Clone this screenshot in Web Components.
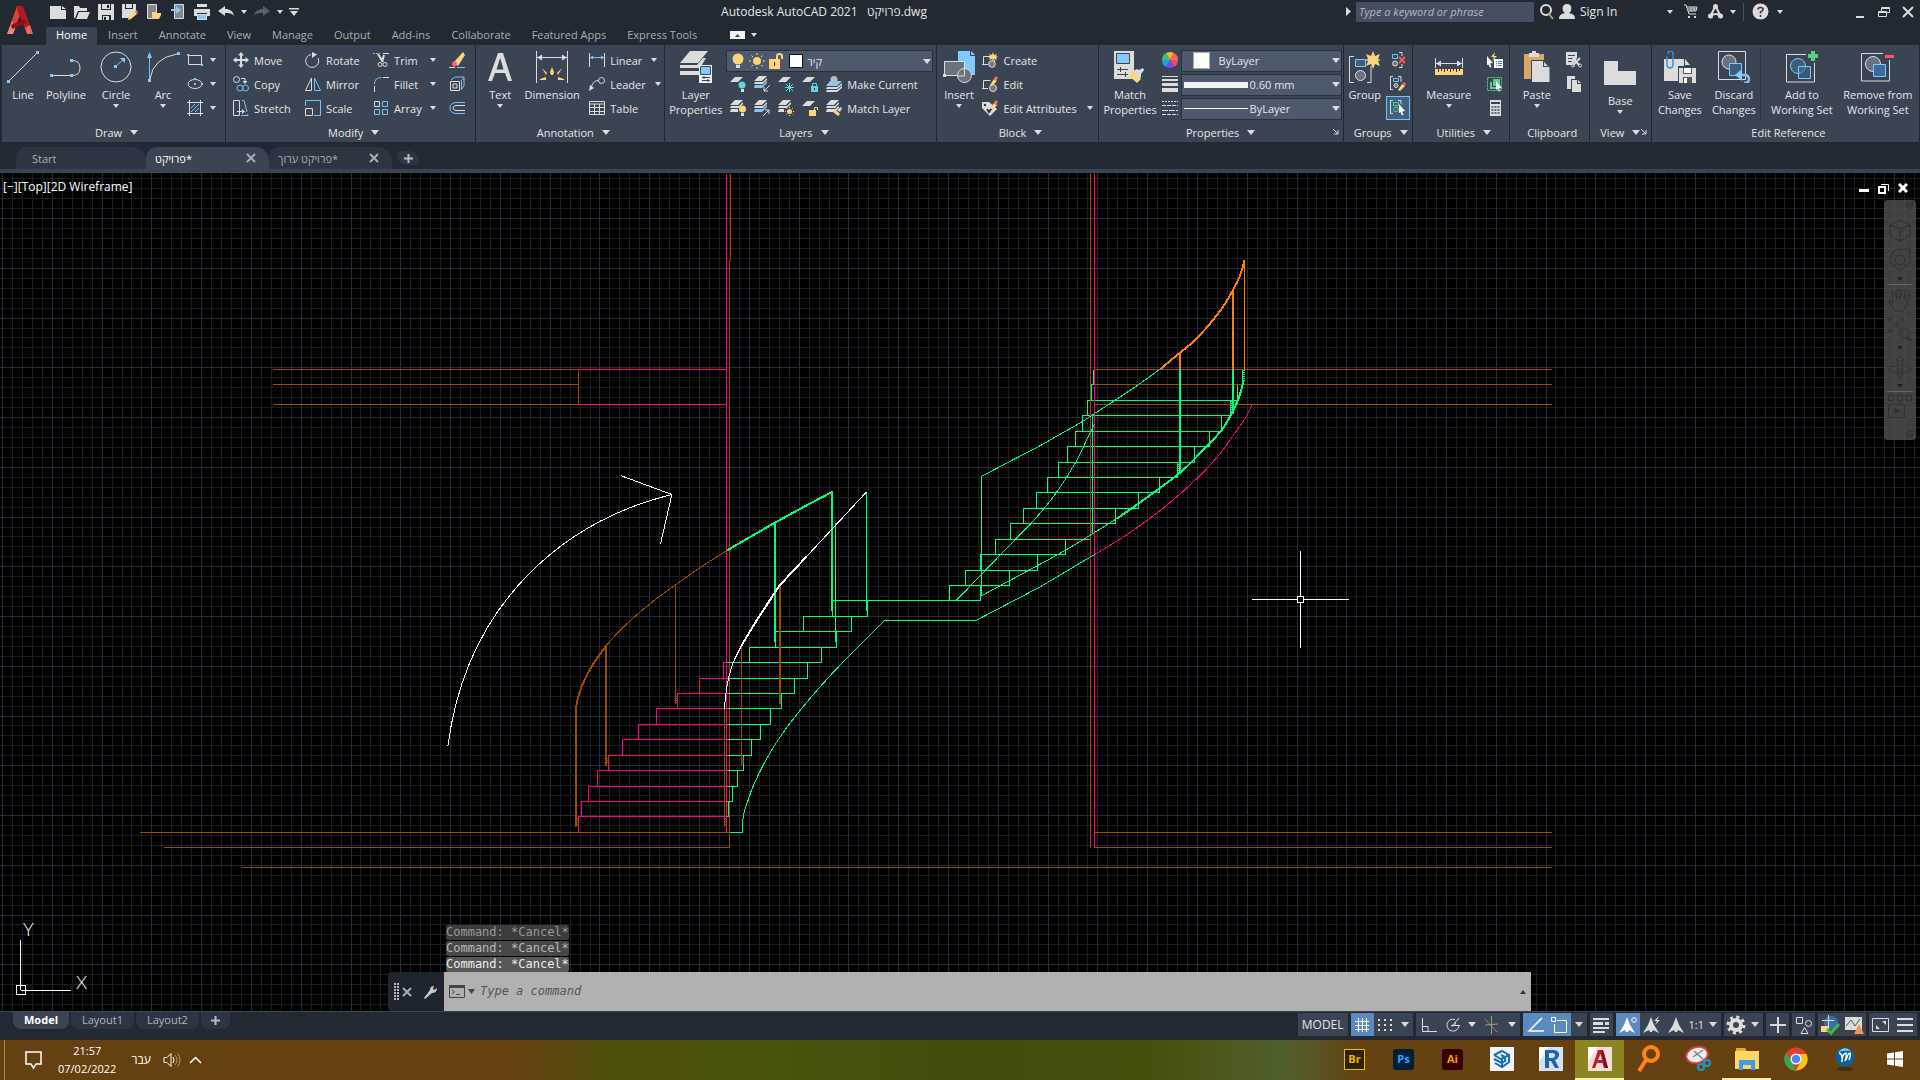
<!DOCTYPE html>
<html lang="en">
<head>
<meta charset="utf-8">
<title>Autodesk AutoCAD 2021</title>
<style>
  html, body { height: 100%; margin: 0; }
  body {
    background: #222933;
    color: #e6e6e6;
    font: 11px/15px "Open Sans", "Noto Sans", "DejaVu Sans", sans-serif;
    overflow: hidden;
  }
</style>
</head>
<body>
<cad-app></cad-app>

<script>
// [width, height, markup]; lower case classes stroke, upper case classes fill
const ICONS = {
  logo: [32, 32, `<path d="M3 30 13 2h6L9 30z" fill="#d8423c"/><path d="M13 2h6l10 28h-6L14 8z" fill="#b5191f"/><path d="M3 30 8 17l3 8-2 5z" fill="#e88a80"/><path d="m23 30-2-6 5-3 3 9z" fill="#e06a62"/><path d="m7 21 14-6 1 4-14 6z" fill="#8f1015"/>`],
  caret: [8, 5, `<path class="L" d="M0 0h8L4 5z"/>`],
  tiny: [6, 4, `<path class="L" d="M0 0h6L3 4z"/>`],
  right: [5, 9, `<path class="L" d="M0 0l5 4.500L0 9z"/>`],
  qmenu: [10, 8, `<path class="L" d="M0 0h10v1.500H0zM1 3h8L5 8z"/>`],
  corner: [6, 6, `<path class="l" d="M0 0l5 5M5 1v4H1"/>`],
  newfile: [16, 16, `<path class="L" d="M0 2h11v4h5v9H0zM12 2l4 3h-4z"/>`],
  open: [16, 16, `<path class="L" d="M0 2h5l1 2h7v3H4L1 14H0zM5 8h11l-3 7H2z"/>`],
  save: [16, 16, `<path class="L" d="M0 0h3v6h10V0h3v16h-3v-5H4v5H0zM4 0h8v5H4zM5 12h6v4H5z"/><path fill="#222933" d="M9 1h2v3H9zM6 13h2v3H6z"/>`],
  saveas: [16, 16, `<path class="L" d="M0 0h3v5h8V0h3v7l-6 7H0z"/><path class="L" d="M4 0h6v4H4z"/><path d="M6 16l1-4 6-5 2 3-6 5z" fill="#ffd478"/><path d="m13 7 2-1 1 2-1 2z" fill="#f66"/>`],
  openweb: [16, 16, `<path fill="#888" stroke="#ddd" d="M1.500.500h9v14h-9z"/><path d="M6 8h4l1 1h4v2l-2 4H6z" fill="#ffd478"/>`],
  saveweb: [14, 16, `<path fill="#888" stroke="#ddd" d="M3.500.500h9v14h-9z"/><path class="B" d="M0 5h5V2l5 4-5 4V7H0z"/>`],
  print: [16, 16, `<path class="L" d="M3 0h10v3H3zM0 5h16v7h-3V9H3v3H0zM3 10h10v6H3z"/><path class="B" d="M4 11h8v4H4z"/>`],
  undo: [16, 12, `<path class="L" d="M0 5l7-5v3c5 0 8 2 9 7-2-3-5-3-9-3v3z"/>`],
  redo: [16, 12, `<path fill="#5b6068" d="M16 5L9 0v3C4 3 1 5 0 10c2-3 5-3 9-3v3z"/>`],
  search: [14, 16, `<circle class="l w2" cx="6" cy="6" r="5"/><path d="m9 10 4 5" stroke="#c89a5a" stroke-width="2"/>`],
  user: [16, 16, `<path class="L" d="M8 0c6 0 5 8 2 9 4 1 6 2 6 6H0c0-4 2-5 6-6C3 8 2 0 8 0z"/>`],
  cart: [14, 15, `<path class="l" d="M0 1h2l3 9h7M3 3h10l-1 4H4M4 5h9M7 3v4M10 3v4"/><path class="L" d="M4 12h2v2H4zM10 12h2v2h-2z"/>`],
  a360: [15, 15, `<path class="l w2" d="m7.500 2-5 10q5-4 10 0z"/><circle class="L" cx="7.500" cy="2.500" r="2.500"/><circle class="L" cx="2.500" cy="12" r="2.500"/><circle class="L" cx="12.500" cy="12" r="2.500"/>`],
  help: [17, 17, `<circle class="L" cx="8.500" cy="8.500" r="8"/><path d="M6 6.500q0-2 2.500-2t2.500 2q0 1.500-2.500 2.500v1.500M8.500 12v2" fill="none" stroke="#333" stroke-width="1.500"/>`],
  min: [8, 12, `<path class="l w2" d="M0 11h8"/>`],
  restore: [12, 12, `<path class="l" d="M.500 5.500h8v5h-8zM3.500 5V1.500h8v5H9M3 2.500h8M1 6.500h8"/>`],
  close: [12, 12, `<path class="l w2" d="m1 1 10 10M11 1 1 11"/>`],
  ribbonmin: [15, 8, `<path fill="#f2f2f2" d="M0 0h15v8H0z"/><path fill="#444" d="M5 6l2.500-3L10 6z"/>`],

  line: [32, 32, `<path class="l" d="m2 30 28-28"/><path class="B" d="M0 29h3v3H0zM29 0h3v3h-3z"/>`],
  polyline: [32, 32, `<path class="l" d="M2 24.500h20M22 9.500q8 0 8 7.500t-8 7.500"/><path class="B" d="M0 23h3v3H0zM20 8h3v3h-3zM20 23h3v3h-3z"/>`],
  circle: [32, 32, `<circle class="l" cx="16" cy="16" r="15"/><path class="b" d="m16 15 8-7"/><path class="B" d="M14 14h3v3h-3zM20 7h5v5z"/>`],
  arc: [34, 32, `<path class="l" d="M4 28Q7 7 31 3"/><path class="b" d="M3.500 4v25"/><path class="B" d="M1 7l2.500-6L6 7zM2 28h3v3H2zM31 1h3v3h-3z"/>`],
  rect: [16, 16, `<path class="l" d="M1.500 3.500h13v9h-13z"/><path class="B" d="M0 2h2v2H0zM14 12h2v2h-2z"/>`],
  ellipse: [16, 16, `<ellipse class="l" cx="8" cy="8" rx="7" ry="4.500"/><path class="B" d="M7 7h2v2H7zM7 2h2v2H7zM14 7h2v2h-2z"/>`],
  hatch: [16, 16, `<path class="l" d="M0 2.500h16M0 13.500h16M2.500 0v16M13.500 0v16"/><path class="b" d="m4 8 4-4M4 12l8-8M8 12l4-4"/>`],
  move: [16, 16, `<path class="l w2" d="M8 2v12M2 8h12"/><path class="L" d="M5 3.500 8 0l3 3.500zM5 12.500 8 16l3-3.500zM3.500 5 0 8l3.500 3zM12.500 5 16 8l-3.500 3z"/>`],
  copy: [16, 16, `<circle class="l" cx="3.500" cy="3.500" r="3"/><path class="l" d="M8 2.500h4v3"/><path class="L" d="M9.500 5h5L12 8z"/><circle class="b" cx="7" cy="12" r="3"/><circle class="b" cx="12.500" cy="12" r="3"/>`],
  stretch: [16, 16, `<path class="l" d="M.500.500h6v15h-6zM4 11.500h6"/><path class="L" d="M9 9l3 2.500L9 14z"/><path class="b" d="M9 .500h2l4 15H8" stroke-dasharray="14 2"/>`],
  rotate: [16, 16, `<path class="l" d="M6 2.500A6.500 6.500 0 1 0 13 6"/><path class="L" d="m7 0 5 2.500L7 6z"/>`],
  mirror: [16, 16, `<path class="l" d="M6.500 2v12.500h-6z"/><path class="b" d="M9.500 2v12.500h6z"/>`],
  scale: [16, 16, `<path class="b" d="M.500 6V.500h15v15H9"/><path class="l" d="M.500 8.500h7v7h-7z"/>`],
  trim: [16, 16, `<path class="b" d="M0 1.500h7" stroke-dasharray="2 1"/><path class="l" d="M10 1.500h6"/><path class="l w2" d="m5 2 5 8M11 3 9 10"/><circle class="l" cx="7" cy="12.500" r="2"/><circle class="l" cx="12" cy="12.500" r="2"/>`],
  fillet: [16, 16, `<path class="b" d="M1.500 8q0-6.500 7-6.500"/><path class="l" d="M10 1.500h6M1.500 10v6"/>`],
  array: [16, 16, `<path class="l" d="M1.500 1.500h5v5h-5z"/><path class="b" d="M9.500 1.500h5v5h-5zM1.500 9.500h5v5h-5zM9.500 9.500h5v5h-5z"/>`],
  erase: [16, 16, `<path class="l" d="M0 15.500h6"/><path class="b" d="M8 15.500h8"/><path d="M5 10 14 0l2 3-7 11z" fill="#ffd478"/><circle cx="5.500" cy="12" r="2.500" fill="#f66"/>`],
  explode: [16, 16, `<path class="l" d="M1.500 5.500h9v9h-9zM4 8h4v4H4z"/><path class="b" d="m2 4 4-3h9v9l-3 4M12 5l3-3M12.500 5v8"/>`],
  offset: [16, 16, `<path class="b" d="M16 2.500H7q-6 .500-6 5.500t6 5.500h9"/><path class="l" d="M16 5.500H7q-3 .500-3 2.500t3 2.500h9"/>`],
  text: [32, 32, `<path class="L" d="M4 30 14 2h5l9 28h-4l-3-8H11l-3 8zM12.500 18.500h7L16.200 7z"/>`],
  dimension: [32, 32, `<path class="l" d="M.500 0v32M31.500 0v32M1 6.500h30"/><path class="L" d="m1 6.500 5-3v6zM31 6.500l-5-3v6z"/><path class="Y" d="M14 21l2-5 2 5-1 3h-2zM6 17l5 5-1 2zM26 17l-5 5 1 2zM4 28l6-2v3H4zM28 28l-6-2v3h6z"/>`],
  linear: [16, 16, `<path class="l" d="M.500 1v14M15.500 1v14"/><path class="b" d="M1 5.500h14"/><path class="B" d="M1 5.500l3-2v4zM15 5.500l-3-2v4z"/>`],
  leader: [16, 16, `<circle class="l" cx="12.500" cy="4.500" r="3"/><path class="l" d="M9 4.500Q4 4.500 2 12"/><path class="L" d="m0 15 1-6 4 3z"/>`],
  table: [16, 16, `<path class="l" d="M.500 1.500h15v13H.500zM0 4h16M1 7.500h15M1 11.500h15M5.500 4v11M10.500 4v11"/>`],
  layerprops: [32, 32, `<path class="L" d="M10 0h18L18 12H0zM0 14h17l6-7h3l-6 10H0zM0 20h20v4H0z"/><path fill="#f2f2f2" d="M19 14h13v18H19z"/><path class="B" d="M21 16h9v7h-9z"/><path d="M20.500 15.500h10v8h-10zM22 26.500h8M22 29.500h8M24 25v3M28 28v3" fill="none" stroke="#3b4453"/>`],
  bulb: [16, 16, `<circle class="Y" cx="8" cy="6" r="5.500"/><path class="L" d="M6 12h4v3H6z"/>`],
  sun: [16, 16, `<circle class="Y" cx="8" cy="8" r="4"/><path class="y" d="M8 0v2M8 14v2M0 8h2M14 8h2M2.500 2.500l1.500 1.500M12 12l1.500 1.500M13.500 2.500 12 4M4 12l-1.500 1.500"/>`],
  unlock: [16, 16, `<path class="Y" d="M1 6h11v10H1z"/><path class="y w2" d="M9 6V3q0-2 2.500-2T14 3v3"/><path fill="#333" d="M6 9h1v4H6z"/>`],
  loff: [16, 16, `<path class="L" d="M5 1h8L8 6H0z"/><circle cx="12" cy="9" r="3.500" fill="#5fd6de"/><path class="L" d="M11 13h3v3h-3z"/>`],
  liso: [16, 16, `<path class="L" d="M5 0h8L8 5H0zM1 6h8l4-4v2L9 8H0z"/><path class="B" d="M1 9h8l4-4v2l-5 5H0z"/><path class="l" d="m16 9-6 6M10 11v4h4"/>`],
  lfreeze: [16, 16, `<path class="L" d="M5 1h8L8 6H0z"/><path stroke="#5fd6de" fill="none" d="M11.500 7v9M7 11.500h9M8 8l7 7M15 8l-7 7"/>`],
  llock: [16, 16, `<path class="L" d="M5 1h8L8 6H0z"/><path fill="#5fd6de" d="M9 10h7v6H9z"/><path stroke="#5fd6de" fill="none" d="M10.500 10V7.500h4V10"/><path fill="#333" d="M12 12h1v2h-1z"/>`],
  lcurrent: [16, 16, `<path class="B" d="M4 5h12l-5 5H0z"/><path class="L" d="M1 11h10l5-4v2l-5 4H0zM1 14h10l5-4v2l-5 4H0z"/><circle fill="#bbb" cx="8" cy="3.500" r="3.500"/>`],
  lon: [16, 16, `<path class="L" d="M5 0h8L8 5H0zM1 6h8l4-4v2L9 8H0zM1 9h7v3H0z"/><circle class="Y" cx="12.500" cy="9" r="3.500"/><path class="L" d="M11 13h3v3h-3z"/>`],
  luniso: [16, 16, `<path class="L" d="M5 0h8L8 5H0zM1 6h8l4-4v2L9 8H0z"/><path class="B" d="M1 9h8l4-4v2l-5 5H0z"/><path class="l" d="m9 16 6-6M11 10h4v4"/>`],
  lthaw: [16, 16, `<path class="L" d="M5 0h8L8 5H0zM1 6h8l4-4v2L9 8H0zM1 9h5v3H0z"/><circle class="Y" cx="11.500" cy="11.500" r="2.500"/><path class="y" d="M11.500 7v9M7 11.500h9M8 8l7 7M15 8l-7 7" stroke-dasharray="1 7"/>`],
  lunlock: [16, 16, `<path class="L" d="M5 1h8L8 6H0z"/><path class="Y" d="M7 10h7v6H7z"/><path class="y" d="M12.500 10V7.500h3V10"/>`],
  lmatch: [16, 16, `<path class="L" d="M5 0h8L8 5H0zM1 6h8l4-4v2L9 8H0zM1 9h8l4-3v2l-5 4H0z"/><path class="Y" d="m7 12 3-2 4 4-2 2z"/><path class="L" d="m11 10 4-3 1 1-2 4z"/>`],
  insert: [32, 32, `<path class="B" d="M15 0h12v5h5v19H15zM28 0l4 4h-4z"/><path fill="#6b7280" stroke="#ddd" d="M1.500 10.500h20v14h-20z"/><circle fill="#6b7280" stroke="#ddd" cx="21.500" cy="24.500" r="7"/><path class="l" d="M21.500 17v8H15"/><path class="L" d="M0 23h3v3H0z"/>`],
  bcreate: [16, 16, `<path class="l" d="M1.500 12.500v-8h7M0 12.500h6M12.500 8v5H8"/><circle fill="#777" stroke="#ddd" cx="10" cy="12" r="3.300"/><path class="Y" d="m11 0 1 3 3-1-1 2 2 1-2 1 1 2-3-1-1 2-1-2-3 1 1-2-2-1 2-1-1-2 3 1z"/>`],
  bedit: [16, 16, `<path class="l" d="M1.500 12.500v-8h7M0 12.500h6"/><circle fill="#777" stroke="#ddd" cx="11" cy="12" r="3.500"/><path class="Y" d="m8 9 4-6 3 2-5 5z"/><path fill="#f66" d="m12 2 2-2 2 2-2 3z"/>`],
  battr: [16, 16, `<path class="L" d="M0 2h7l8 7-7 7-8-8z"/><circle cx="3" cy="5" r="1.200" fill="#333"/><path d="m5 9 2 3 5-7" stroke="#333" stroke-width="2" fill="none"/><path class="Y" d="m8 8 4-5 3 2-4 5z"/><path fill="#f66" d="m12 2 2-2 2 2-2 3z"/>`],
  match: [32, 32, `<path class="L" d="M0 0h20v28H0z"/><path class="B" stroke="#3b4453" d="M2.500 2.500h13v10h-13z"/><path stroke="#444" d="M3 18.500h11M3 23.500h11M6.500 16v5M11.500 21v5"/><path class="Y" d="m14 24 6-4 7 8-4 4z"/><path class="L" d="m19 20 4-2 2 1 4-2 1 2-3 4v3l-2 2z"/>`],
  wheel: [16, 16, `<path fill="#ffb03b" d="M8 8 4 1q4-2 8 0z"/><path fill="#f66a4a" d="m8 8 4-7q4 2 4 7z"/><path fill="#e84a6f" d="M8 8h8q0 5-4 7z"/><path fill="#8a3ff0" d="m8 8 4 7q-4 2-8 0z"/><path fill="#1aa3e8" d="m8 8-4 7q-4-2-4-7z"/><path fill="#44c06c" d="M8 8H0q0-5 4-7z"/>`],
  weights: [16, 16, `<path class="L" d="M0 0h16v1H0zM0 3h16v2H0zM0 7h16v3H0zM0 12h16v4H0z"/>`],
  types: [16, 16, `<path class="l" d="M0 1.500h16" stroke-dasharray="2 1"/><path class="l" d="M0 5.500h16M0 14.500h16" stroke-dasharray="4 1"/><path class="l" d="M0 10.500h16" stroke-dasharray="6 1"/>`],
  group: [32, 32, `<path class="l" d="M5 5.500H.500v26H5M18 31.500h4V15"/><path fill="#3c5f7d" stroke="#7cc8ff" d="M6.500 8.500h10v7h-10z"/><circle fill="#6b7280" stroke="#ddd" cx="11.500" cy="24.500" r="5"/><path class="Y" d="m24 0 2 5 5-2-2 5 3 1-3 1 2 5-5-2-2 5-2-5-5 2 2-5-3-1 3-1-2-5 5 2z"/>`],
  ungroup: [16, 16, `<path class="b" d="M2.500 2.500h5v4h-5z"/><circle fill="#777" stroke="#ddd" cx="5" cy="11.500" r="2.500"/><path class="l" d="M9 .500h3V4M9 15.500h3V12"/><path stroke="#f55" stroke-width="2" d="m9 5 6 6M15 5l-6 6"/>`],
  gedit: [16, 16, `<path class="l" d="M3 .500H.500v13H3M8 .500h3V6"/><path class="b" d="M3.500 2.500h5v3h-5z"/><circle fill="#777" stroke="#ddd" cx="6" cy="9.500" r="2"/><path class="Y" d="m8 14 4-6 3 2-5 5z"/><path fill="#f66" d="m12 7 2-1 2 2-1 2z"/>`],
  gselect: [16, 16, `<path class="l" d="M3 .500H.500v13H3M8 .500h3V4"/><path class="g" d="M3.500 2.500h5v3h-5z"/><circle class="g" cx="6" cy="9.500" r="2.300"/><path fill="#fff" d="m9 4 6 7-3 .500 1.500 3.500-1.500.500-1.500-3.500L9 13z"/>`],
  measure: [32, 32, `<path class="l" d="M2.500 7v10M29.500 7v10M3 12.500h26"/><path class="L" d="m3 12.500 5-3v6zM29 12.500l-5-3v6z"/><path class="Y" d="M2 18h28v6H2z"/><path stroke="#333" d="M5.500 18v3M8.500 18v2M11.500 18v3M14.500 18v2M17.500 18v3M20.500 18v2M23.500 18v3M26.500 18v2"/>`],
  qselect: [16, 16, `<path fill="#fff" d="m0 4 6 7-3 .500 1.500 3.500-1.500.500-1.500-3L0 13z"/><path class="Y" d="m8 0-4 5h3L5 9l5-5H7z"/><path fill="#fff" d="M7 7h9v9H7z"/><path stroke="#38a" d="M9 9.500h1M11 9.500h4M9 11.500h1M11 11.500h4M9 13.500h1M11 13.500h4"/>`],
  selall: [16, 16, `<path class="g" d="M.500 1.500h14v13H.500z" stroke-dasharray="2 1"/><path class="G" d="M6 3h7v7H6zM3 6h2v5h5v2H3z"/><path fill="#fff" d="m9 5 6 7-3 .500 1 3h-1l-1.500-3L9 14z"/>`],
  calc: [16, 16, `<path class="L" d="M3 0h11v16H3z"/><path stroke="#3b4453" stroke-width="2" d="M4 3h9"/><path stroke="#3b4453" stroke-width="1.500" stroke-dasharray="2 1" d="M4.500 7h8M4.500 10h8M4.500 13h8"/>`],
  paste: [28, 32, `<path fill="#d9a76a" d="M1 3h20v25H1z"/><path class="L" d="M6 2h3V0h4v2h3v4H6z"/><path class="L" stroke="#3b4453" d="M8.500 9.500H20l7 7v15H8.500z"/><path fill="#3b4453" d="M20 9v7h7l-1-1h-5v-6z"/>`],
  cut: [16, 16, `<path class="L" d="M0 0h11v6L6 13H0z"/><path stroke="#3b4453" d="M2 3.500h7M2 6.500h6M2 9.500h4"/><path class="l w2" d="m7 6 6 7M14 6l-7 7"/><circle class="l" cx="7" cy="13.500" r="1.500"/><circle class="l" cx="14" cy="13.500" r="1.500"/>`],
  copyclip: [16, 16, `<path class="L" d="M1 0h8v3H5v10H1z"/><path class="L" d="M6 4h5v4h4v8H6zM12 4l3 3h-3z"/>`],
  base: [34, 38, `<path class="L" d="M1 10h14v10h18v14H1z"/>`],
  savechg: [32, 32, `<path class="L" d="M0 8h20v7h-6v15H0zM21 8l5 6h-5z"/><path class="L" d="M15 17h17v15H15z"/><path fill="#555" d="M19 17h9v6h-9zM19 26h9v6h-9z"/><path fill="#fff" d="M20 17h7v5h-7zM20 27h3v5h-3z"/><path fill="none" stroke="#3b8fd0" stroke-width="1.500" d="M3 5v8q0 4 3 4t3-4V3q0-3-2.500-3T4 3"/>`],
  discard: [32, 32, `<path class="l" d="M.500.500h27v28H.500z"/><circle fill="#6b7280" stroke="#ddd" cx="11" cy="11" r="7"/><path fill="#3c5f7d" stroke="#7cc8ff" d="M11.500 12.500h12v12h-12z"/><path class="b" d="M20 24h6q5 0 5 4t-5 4" style="stroke-width:2.500px"/><path class="B" d="m17 24 7-6v12z"/>`],
  addset: [32, 32, `<path class="l" d="M28.500 12v19H.500V3.500H20"/><circle fill="#3c5f7d" stroke="#7cc8ff" cx="12" cy="15" r="7.500"/><path fill="#3c6c9a88" stroke="#7cc8ff" d="M12.500 15.500h12v12h-12z"/><path class="G" d="M25 0h4v3h3v4h-3v3h-4V7h-3V3h3z"/>`],
  remset: [34, 32, `<path class="l" d="M28.500 9v21H.500V2.500H22"/><circle fill="#6b7280" stroke="#ddd" cx="12" cy="13" r="7.500"/><path fill="#3c6c9a" stroke="#7cc8ff" d="M12.500 13.500h12v12h-12z"/><path fill="#f55" d="M24 4h9v3h-9z"/>`],

  x10: [10, 10, `<path stroke="#a8adb5" stroke-width="2" d="m1 1 8 8M9 1 1 9"/>`],
  plus: [9, 9, `<path stroke="#b8bcc2" stroke-width="2" d="M4.500 0v9M0 4.500h9"/>`],
  vmin: [10, 10, `<path fill="#fff" d="M0 6h10v3H0z"/>`],
  vrest: [11, 11, `<path fill="none" stroke="#fff" stroke-width="2" d="M1 4h6v6H1z"/><path fill="none" stroke="#fff" d="M3 1.500h7.500V8"/>`],
  vclose: [10, 10, `<path fill="none" stroke="#fff" stroke-width="3" d="m1 1 8 8M9 1 1 9"/>`],
  grip: [5, 18, `<path stroke="#b8b8b8" stroke-width="2" stroke-dasharray="2 1" d="M1 0v18M4 0v18"/>`],
  wrench: [14, 14, `<path fill="#c8c8c8" d="M13 3l-3 2-1-1 1-3Q6 1 6 5l-6 8 1 1 7-6q5 0 5-5z"/>`],
  prompt: [16, 13, `<path fill="none" stroke="#444" d="M.500.500h15v12H.500zM3 5l2.500 2L3 9M7 9.500h4"/><path fill="#444" d="M0 0h16v3H0z"/>`],
  dcaret: [7, 5, `<path fill="#444" d="M0 0h7L3.500 5z"/>`],
  ucaret: [6, 4, `<path fill="#333" d="M0 4h6L3 0z"/>`],

  sgrid: [20, 20, `<path stroke="#fff" fill="none" d="M6.500 3v14M10.500 3v14M14.500 3v14M3 6.500h14M3 10.500h14M3 14.500h14"/>`],
  ssnap: [20, 20, `<path stroke="#ddd" stroke-width="2" stroke-dasharray="2 4" d="M3 5h14M3 10h14M3 15h14"/>`],
  sortho: [20, 20, `<path class="l" d="M4.500 3v13.500H19M5 11.500h5v5"/>`],
  spolar: [20, 20, `<path class="l" d="M17 10a6 6 0 1 1-4-5.500M10 11l7-8M9 10.500h9M10 11q5-1 3-4"/>`],
  siso: [20, 20, `<path stroke="#e25c5c" d="m3 4 12 13"/><path stroke="#5fbf6c" d="M9.500 1v18"/><path stroke="#999" d="m3 10 13-1"/>`],
  sangle: [20, 20, `<path stroke="#fff" fill="none" stroke-width="1.500" d="M17 3 4 16h15"/>`],
  sosnap: [20, 20, `<path stroke="#fff" fill="none" d="M8 5.500h9.500v12h-12V9"/><path stroke="#fff" fill="none" d="M2.500 2.500h4v4h-4z"/>`],
  slw: [20, 20, `<path class="L" d="M2 3h16v2H2zM2 7h10v3H2zM14 7h4v3h-4zM2 12h16v2H2zM2 16h12v2H2z"/>`],
  sann: [20, 20, `<path fill="#fff" d="M9 2l3 8 5 8-6-3-1 2H8l-1-2-6 3 5-8z"/><circle cx="16" cy="5" r="2.300" fill="none" stroke="#fff"/>`],
  sauto: [20, 20, `<path class="L" d="M9 2l3 8 5 8-6-3-1 2H8l-1-2-6 3 5-8zM17 1l-5 5h3l-2 4 5-5h-3z"/>`],
  sscale: [20, 20, `<path class="L" d="M10 2l3 8 5 8-6-3-1 2H9l-1-2-6 3 5-8z"/>`],
  sgear: [20, 20, `<circle cx="10" cy="10" r="5" fill="none" stroke="#ddd" stroke-width="4"/><circle cx="10" cy="10" r="8" fill="none" stroke="#ddd" stroke-width="3" stroke-dasharray="3 3.280"/>`],
  splus: [20, 20, `<path class="l w2" d="M10 2v16M2 10h16"/>`],
  siso2: [20, 20, `<path class="l" d="M2.500 2.500h6v6h-6zM7 18.500h7l-3.500-6z"/><circle class="l" cx="14.500" cy="8.500" r="3"/>`],
  shw: [20, 20, `<circle cx="11" cy="8" r="7" fill="#356fb0"/><path class="l" d="M2 5.500h12M8.500 0v11"/><path class="Y" d="M1 11h8v6H1z"/><path stroke="#43b54a" stroke-width="3" fill="none" d="m7 14 4 4 8-9"/>`],
  sgraph: [20, 20, `<path class="L" d="M1 2h17v13H1z"/><path stroke="#555" fill="none" d="m2 11 5-6 4 6 5-7"/><path fill="#f2925c" d="m15 9 5 10H10z"/>`],
  sfull: [20, 20, `<path class="l" d="M1.500 3.500h16v13h-16z"/><path class="L" d="M11 6h4v4zM5 10v4h4z"/>`],
  smenu: [20, 20, `<path class="l w2" d="M2 4h16M2 10h16M2 16h16"/>`],

  note: [18, 19, `<path stroke="#fff" fill="none" stroke-width="1.500" d="M1 1h15v12H11l-2.500 4L6 13H1z"/>`],
  sound: [18, 16, `<path stroke="#fff" fill="none" d="M1 5.500h3l4-4v13l-4-4H1zM10 5q2 3 0 6"/><path stroke="#b59a72" fill="none" d="M12 3q4 5 0 10M14.500 1.500q5 6.500 0 13"/>`],
  chev: [13, 8, `<path stroke="#fff" fill="none" stroke-width="1.500" d="m1 7 5.500-5.500L12 7"/>`],
  sketchup: [24, 24, `<path fill="#eef4fa" d="M0 0h24v24H0z"/><path fill="none" stroke="#1c70ad" stroke-width="2" d="M4 8l8-4 7 4v7l-7 5-7-4M4 8l7 4 4-2-4-2M4 12l8 4 4-3M12 12v8M19 8l-4 2v5"/>`],
  revit: [24, 24, `<path fill="#d3e2f2" d="M0 0h24v24H0z"/><path fill="#fff" d="M0 0h10L0 14z"/><path fill="#1d64ae" d="M6 3h9q6 1 5 6-1 3-4 4l4 8h-4l-4-7h-2v7H6zM10 6v5h3q3 0 3-3 0-2-3-2z"/>`],
  acad: [24, 24, `<path fill="#f3dfdc" d="M0 0h24v24H0z"/><path fill="#fff" d="M0 0h10L0 14z"/><path fill="#c01e26" d="M4 21 10 3h5l5 18h-4l-1.500-5H9l-2 5zM10 13h4l-1.500-6z"/><path fill="#7e0d14" d="m13 3h2l5 18h-3z"/>`],
  find: [24, 28, `<circle cx="14" cy="9" r="7" fill="none" stroke="#ff8412" stroke-width="4"/><path stroke="#ff8412" stroke-width="4" d="m9 15-7 11"/>`],
  snip: [26, 28, `<ellipse cx="12" cy="10" rx="11" ry="8" fill="#eee" stroke="#c44" stroke-width="2" transform="rotate(-15 12 10)"/><path stroke="#888" stroke-width="1.500" d="m8 12 10-7M9 6l10 9"/><circle cx="16" cy="22" r="3" fill="none" stroke="#2a8fd0" stroke-width="2"/><circle cx="22" cy="18" r="3" fill="none" stroke="#2a8fd0" stroke-width="2"/>`],
  folder: [24, 22, `<path fill="#e8a820" d="M1 0h9l2 3H1z"/><path fill="#ffd566" d="M0 3h24v18H0z"/><path fill="#3a9fe8" d="M4 12h16v10h-4v-5H8v5H4z"/>`],
  chrome: [24, 24, `<circle cx="12" cy="12" r="11.500" fill="#e33b2e"/><path fill="#2fa84f" d="M2 6 8 15l4 8.500A11.500 11.500 0 0 1 2 6z"/><path fill="#fbc116" d="M12 7h10.500A11.500 11.500 0 0 1 12 23.500L17 14z"/><circle cx="12" cy="12" r="5.500" fill="#fff"/><circle cx="12" cy="12" r="4.300" fill="#4a86f0"/>`],
  globe: [20, 24, `<ellipse cx="10" cy="22" rx="8" ry="2" fill="#2a1a08" opacity=".5"/><circle cx="10" cy="10" r="9.500" fill="#0b5f9e"/><path fill="#7cd0f5" d="M3 5q7-7 13-1-7-1-13 1z"/><path stroke="#fff" stroke-width="1.500" fill="none" d="M4 6q4 1 3 9M7 13q1-7 4-7 1 3-1 8M11 13q2-7 4-7 1 3-1 7"/>`],
  windows: [16, 16, `<path fill="#fff" d="M0 2.500 7 1.500V7.500H0zM8 1.300 16 0v7.500H8zM0 8.500h7v6l-7-1zM8 8.500h8V16l-8-1.300z"/>`],

  ncube: [24, 24, `<path class="n" d="M12 1l10 5v11l-10 5-10-5V6zM2 6l10 4 10-4M12 10v12"/><path class="n" stroke-dasharray="2 2" d="M5 10l4 2M15 12l4-2M8 5l4 2"/>`],
  nwheel: [24, 24, `<path class="n" d="M12 1h10v11a10 10 0 1 1-10-11z"/><circle class="n" cx="12" cy="12" r="5"/><path class="n" d="m5 5 4 4M19 19l-4-4M5 19l4-4"/>`],
  nhand: [24, 24, `<path class="n" d="M7 23q-4-5-6-10 1-2 4 2L4 5q1-2 3 0l2 6V2q1-2 3 0v9l2-8q2-2 3 0l-1 9 4-6q2-1 2 1l-4 10-3 6z"/>`],
  nzoom: [24, 24, `<path class="n" d="m1 1 14 14M15 1 1 15M1 5V1h4M11 1h4v4M1 11v4h4"/><circle class="n" cx="16" cy="16" r="5"/><path stroke="#2c2e30" stroke-width="3" d="m19 20 4 4"/>`],
  norbit: [24, 24, `<path class="n" d="M10 23V5H8l4-4 4 4h-2v18zM9 11Q0 12 1 14q2 4 11 4t11-4q0-2-8-3"/>`],
  nplay: [24, 24, `<path class="n" d="M.500.500h5v5h-5zM9.500.500h5v5h-5zM18.500.500h5v5h-5zM.500 9.500h16v13h-16z"/><path fill="#2c3038" d="m6 12 6 4-6 4z"/>`],
  ndown: [6, 4, `<path fill="#222" d="M0 0h6L3 4z"/>`],
  nx: [8, 8, `<circle class="n" cx="4" cy="4" r="3.500"/><path class="n" d="m2 2 4 4M6 2 2 6"/>`],
  nmin: [8, 8, `<circle class="n" cx="4" cy="4" r="3.500"/><path class="n" d="M2 3.500h4M2 5.500h4"/>`],
};

class CadElement extends HTMLElement {
  constructor() {
    super();
    this.attachShadow({ mode: 'open' });
  }

  connectedCallback() {
    this.shadowRoot.innerHTML = this.template;
  }
}

class CadIcon extends CadElement {
  get template() {
    const [w, h, markup] = ICONS[this.getAttribute('name')];
    return `
      <style>
        :host { display: block; flex: none; line-height: 0; }
        .l { stroke: #dcdcdc; fill: none; }
        .L { fill: #dcdcdc; }
        .b { stroke: #74c3fb; fill: none; }
        .B { fill: #83c9fc; }
        .y { stroke: #ffd478; fill: none; }
        .Y { fill: #ffd478; }
        .g { stroke: #58cf86; fill: none; }
        .G { fill: #58cf86; }
        .n { stroke: #2c2e30; fill: none; }
        .w2 { stroke-width: 2px; }
      </style>
      <svg width="${w}" height="${h}" viewBox="0 0 ${w} ${h}" aria-hidden="true">${markup}</svg>
    `;
  }
}

// ribbon button: stacked with [big], otherwise one 24px row
class CadTool extends CadElement {
  get template() {
    const big = this.hasAttribute('big');
    const label = this.getAttribute('label');
    return `
      <style>
        :host { display: block; }
        button {
          display: flex;
          align-items: center;
          gap: 5px;
          width: 100%;
          height: 24px;
          padding: 0;
          border: 0;
          background: none;
          color: inherit;
          font: inherit;
          white-space: nowrap;
        }
        button.big {
          flex-direction: column;
          gap: 4px;
          height: auto;
          padding-top: 3px;
        }
        .big cad-icon[name=tiny] { margin-top: -2px; }
        .small cad-icon[name=tiny] { margin-left: var(--caret, auto); }
        :host([active]) button {
          justify-content: center;
          background: #43607d;
          box-shadow: inset 0 0 0 1px #74c3fb;
        }
      </style>
      <button class="${big ? 'big' : 'small'}" ${label ? `aria-label="${label}"` : ''}>
        <cad-icon name="${this.getAttribute('icon')}"></cad-icon>
        <slot></slot>
        ${this.hasAttribute('menu') ? '<cad-icon name="tiny"></cad-icon>' : ''}
      </button>
    `;
  }
}

class CadPanel extends CadElement {
  get template() {
    return `
      <style>
        :host {
          display: flex;
          flex-direction: column;
          background: #3b4453;
          min-width: 0;
        }
        .body {
          flex: 1;
          display: grid;
          grid-template-columns: ${this.getAttribute('cols')};
          align-content: start;
          padding: 3px 0 0 var(--start, 0);
        }
        footer {
          display: flex;
          align-items: center;
          height: 20px;
          padding: 0 4px 0 10px;
        }
        span { flex: 1; display: flex; justify-content: center; align-items: center; gap: 8px; }
      </style>
      <div class="body"><slot></slot></div>
      <footer>
        <span>${this.getAttribute('heading')}
        ${this.hasAttribute('menu') ? '<cad-icon name="caret"></cad-icon>' : ''}</span>
        ${this.hasAttribute('dialog') ? '<cad-icon name="corner"></cad-icon>' : ''}
      </footer>
    `;
  }
}

class CadCombo extends CadElement {
  get template() {
    return `
      <style>
        :host { display: grid; height: 22px; align-items: center; }
        select {
          grid-area: 1 / 1;
          width: 100%;
          height: 22px;
          padding: 0 0 0 var(--pad);
          appearance: none;
          border: 1px solid #29313d;
          border-radius: 0;
          background: #4d596d;
          color: inherit;
          font: inherit;
        }
        .front {
          grid-area: 1 / 1;
          display: flex;
          align-items: center;
          gap: 3px;
          padding-left: var(--front);
          pointer-events: none;
        }
        .arrow { grid-area: 1 / 1; justify-self: end; margin-right: 2px; pointer-events: none; }
      </style>
      <select aria-label="${this.getAttribute('label')}"><option>${this.getAttribute('value')}</option></select>
      <div class="front"><slot></slot></div>
      <cad-icon class="arrow" name="caret"></cad-icon>
    `;
  }
}

class CadRibbon extends CadElement {
  get template() {
    return `
      <style>
        :host {
          display: grid;
          grid-template-columns: 223fr 249fr 188fr 271fr 160fr 244fr 68fr 96fr 79fr 61fr 267fr;
          gap: 1px;
          height: 97px;
          padding: 0 1px 0 2px;
        }
        .row { display: flex; gap: 8px; height: 24px; align-items: center; }
        .swatch { width: 12px; height: 12px; border: 1px solid #111; background: #fff; }
        .wide { width: 15px; height: 15px; border-color: #aaa; }
        .thick { width: 64px; height: 6px; background: #f2f2f2; }
        .thin { width: 64px; height: 1px; background: #f2f2f2; }
        .layer { --pad: 80px; --front: 4px; margin-top: 2px; }
        .layer .swatch { margin-left: 2px; }
        .props { display: grid; gap: 1px; margin: 1px 1px 0 3px; }
        .props cad-combo { --front: 3px; --pad: 68px; height: 23px; }
        .props cad-combo:first-child { --front: 12px; --pad: 37px; }
        .line { border-left: 1px solid #2a313c; height: 72px; }
      </style>
      <cad-panel heading="Draw" menu cols="42px 44px 56px 38px 1fr">
        <cad-tool big icon="line">Line</cad-tool>
        <cad-tool big icon="polyline">Polyline</cad-tool>
        <cad-tool big menu icon="circle">Circle</cad-tool>
        <cad-tool big menu icon="arc">Arc</cad-tool>
        <div style="padding-left: 5px; --caret: 2px">
          <cad-tool icon="rect" label="Rectangle" menu></cad-tool>
          <cad-tool icon="ellipse" label="Ellipse" menu></cad-tool>
          <cad-tool icon="hatch" label="Hatch" menu></cad-tool>
        </div>
      </cad-panel>

      <cad-panel heading="Modify" menu cols="72px 68px 63px 1fr" style="--start: 7px">
        <div>
          <cad-tool icon="move">Move</cad-tool>
          <cad-tool icon="copy">Copy</cad-tool>
          <cad-tool icon="stretch">Stretch</cad-tool>
        </div>
        <div>
          <cad-tool icon="rotate">Rotate</cad-tool>
          <cad-tool icon="mirror">Mirror</cad-tool>
          <cad-tool icon="scale">Scale</cad-tool>
        </div>
        <div>
          <cad-tool icon="trim" menu>Trim</cad-tool>
          <cad-tool icon="fillet" menu>Fillet</cad-tool>
          <cad-tool icon="array" menu>Array</cad-tool>
        </div>
        <div style="padding-left: 13px">
          <cad-tool icon="erase" label="Erase"></cad-tool>
          <cad-tool icon="explode" label="Explode"></cad-tool>
          <cad-tool icon="offset" label="Offset"></cad-tool>
        </div>
      </cad-panel>

      <cad-panel heading="Annotation" menu cols="48px 56px 1fr">
        <cad-tool big menu icon="text">Text</cad-tool>
        <cad-tool big icon="dimension">Dimension</cad-tool>
        <div style="padding-left: 9px; --caret: 4px">
          <cad-tool icon="linear" menu>Linear</cad-tool>
          <cad-tool icon="leader" menu>Leader</cad-tool>
          <cad-tool icon="table">Table</cad-tool>
        </div>
      </cad-panel>

      <cad-panel heading="Layers" menu cols="61px 1fr">
        <cad-tool big icon="layerprops">Layer<br>Properties</cad-tool>
        <div style="padding-right: 3px">
          <cad-combo class="layer" label="Layer" value="קיר">
            <cad-icon name="bulb"></cad-icon>
            <cad-icon name="sun"></cad-icon>
            <cad-icon name="unlock"></cad-icon>
            <div class="swatch"></div>
          </cad-combo>
          <div class="row" style="padding-left: 4px">
            <cad-tool icon="loff" label="Off"></cad-tool>
            <cad-tool icon="liso" label="Isolate"></cad-tool>
            <cad-tool icon="lfreeze" label="Freeze"></cad-tool>
            <cad-tool icon="llock" label="Lock"></cad-tool>
            <cad-tool icon="lcurrent">Make Current</cad-tool>
          </div>
          <div class="row" style="padding-left: 4px">
            <cad-tool icon="lon" label="Turn All Layers On"></cad-tool>
            <cad-tool icon="luniso" label="Unisolate"></cad-tool>
            <cad-tool icon="lthaw" label="Thaw All Layers"></cad-tool>
            <cad-tool icon="lunlock" label="Unlock"></cad-tool>
            <cad-tool icon="lmatch">Match Layer</cad-tool>
          </div>
        </div>
      </cad-panel>

      <cad-panel heading="Block" menu cols="43px 1fr">
        <cad-tool big menu icon="insert">Insert</cad-tool>
        <div style="padding-left: 2px; --caret: 5px">
          <cad-tool icon="bcreate">Create</cad-tool>
          <cad-tool icon="bedit">Edit</cad-tool>
          <cad-tool icon="battr" menu>Edit Attributes</cad-tool>
        </div>
      </cad-panel>

      <cad-panel heading="Properties" menu dialog cols="63px 16px 1fr">
        <cad-tool big icon="match">Match<br>Properties</cad-tool>
        <div>
          <cad-tool icon="wheel" label="Object Color"></cad-tool>
          <cad-tool icon="weights" label="Lineweight"></cad-tool>
          <cad-tool icon="types" label="Linetype"></cad-tool>
        </div>
        <div class="props">
          <cad-combo label="Object Color" value="ByLayer"><div class="swatch wide"></div></cad-combo>
          <cad-combo label="Lineweight" value="0.60 mm"><div class="thick"></div></cad-combo>
          <cad-combo label="Linetype" value="ByLayer"><div class="thin"></div></cad-combo>
        </div>
      </cad-panel>

      <cad-panel heading="Groups" menu cols="42px 24px">
        <cad-tool big icon="group">Group</cad-tool>
        <div>
          <cad-tool icon="ungroup" label="Ungroup" style="padding-left: 4px"></cad-tool>
          <cad-tool icon="gedit" label="Group Edit" style="padding-left: 4px"></cad-tool>
          <cad-tool icon="gselect" label="Group Selection" active></cad-tool>
        </div>
      </cad-panel>

      <cad-panel heading="Utilities" menu cols="72px 1fr">
        <cad-tool big menu icon="measure">Measure</cad-tool>
        <div style="padding-left: 2px">
          <cad-tool icon="qselect" label="Quick Select"></cad-tool>
          <cad-tool icon="selall" label="Select All"></cad-tool>
          <cad-tool icon="calc" label="Quick Calculator"></cad-tool>
        </div>
      </cad-panel>

      <cad-panel heading="Clipboard" cols="54px 1fr">
        <cad-tool big menu icon="paste">Paste</cad-tool>
        <div style="padding-left: 2px">
          <cad-tool icon="cut" label="Cut"></cad-tool>
          <cad-tool icon="copyclip" label="Copy Clip"></cad-tool>
        </div>
      </cad-panel>

      <cad-panel heading="View" menu dialog cols="1fr">
        <cad-tool big menu icon="base">Base</cad-tool>
      </cad-panel>

      <cad-panel heading="Edit Reference" cols="56px 52px 4px 76px 76px">
        <cad-tool big icon="savechg">Save<br>Changes</cad-tool>
        <cad-tool big icon="discard">Discard<br>Changes</cad-tool>
        <div class="line"></div>
        <cad-tool big icon="addset">Add to<br>Working Set</cad-tool>
        <cad-tool big icon="remset">Remove from<br>Working Set</cad-tool>
      </cad-panel>
    `;
  }
}

class CadTitle extends CadElement {
  get template() {
    const quick = ['newfile', 'open', 'save', 'saveas', 'openweb', 'saveweb', 'print', 'undo'];
    const tabs = ['Insert', 'Annotate', 'View', 'Manage', 'Output', 'Add-ins', 'Collaborate', 'Featured Apps', 'Express Tools'];
    return `
      <style>
        :host { display: grid; grid-template-columns: 46px 1fr; height: 45px; }
        .logo { padding: 4px 0 0 4px; }
        .bar { display: flex; align-items: center; height: 23px; margin-bottom: 4px; }
        button {
          display: flex;
          justify-content: center;
          align-items: center;
          width: 24px;
          height: 22px;
          padding: 0;
          border: 0;
          background: none;
          color: inherit;
          font: inherit;
        }
        button.slim { width: 12px; }
        button.mid { width: 16px; }
        h1 { flex: 1; margin: 0; text-align: center; font-weight: normal; font-size: 12px; white-space: pre; }
        input {
          box-sizing: border-box;
          width: 178px;
          height: 20px;
          margin: 0 1px 0 5px;
          padding: 0 3px;
          border: 0;
          background: #454f61;
          color: inherit;
          font: inherit;
          font-style: italic;
        }
        input::placeholder { color: #b4b8bf; }
        .sign { width: 120px; gap: 5px; justify-content: flex-start; font-size: 12px; }
        .sign cad-icon[name=tiny] { margin: 0 6px 0 auto; }
        .rule { border-left: 1px solid #4a5260; height: 18px; margin: 0 4px; }
        nav { display: flex; gap: 1px; height: 18px; }
        nav a { color: #a9adb3; padding: 0 10px; text-decoration: none; line-height: 16px; }
        nav a.on { background: #3b4453; color: #fff; border-radius: 2px 2px 0 0; }
        nav button { width: auto; height: 16px; gap: 6px; margin-left: 22px; }
      </style>
      <cad-icon class="logo" name="logo"></cad-icon>
      <div>
        <div class="bar">
          ${quick.map(name => `<button aria-label="${name}"><cad-icon name="${name}"></cad-icon></button>`).join('')}
          <button class="slim" aria-label="Undo list"><cad-icon name="tiny"></cad-icon></button>
          <button aria-label="redo"><cad-icon name="redo"></cad-icon></button>
          <button class="slim" aria-label="Redo list"><cad-icon name="tiny"></cad-icon></button>
          <button class="mid" aria-label="Customize"><cad-icon name="qmenu"></cad-icon></button>
          <h1>Autodesk AutoCAD 2021   פרויקט.dwg</h1>
          <cad-icon name="right"></cad-icon>
          <input type="search" placeholder="Type a keyword or phrase" aria-label="Search">
          <button aria-label="Search"><cad-icon name="search"></cad-icon></button>
          <button class="sign"><cad-icon name="user"></cad-icon>Sign In<cad-icon name="tiny"></cad-icon></button>
          <button aria-label="Store"><cad-icon name="cart"></cad-icon></button>
          <button aria-label="Apps"><cad-icon name="a360"></cad-icon></button>
          <button class="slim" aria-label="Apps list"><cad-icon name="tiny"></cad-icon></button>
          <div class="rule"></div>
          <button aria-label="Help"><cad-icon name="help"></cad-icon></button>
          <button class="mid" aria-label="Help list"><cad-icon name="tiny"></cad-icon></button>
          <button style="margin-left: 60px" aria-label="Minimize"><cad-icon name="min"></cad-icon></button>
          <button aria-label="Restore"><cad-icon name="restore"></cad-icon></button>
          <button aria-label="Close"><cad-icon name="close"></cad-icon></button>
        </div>
        <nav>
          <a class="on" href="#home">Home</a>
          ${tabs.map(tab => `<a href="#${tab}">${tab}</a>`).join('')}
          <button aria-label="Minimize ribbon"><cad-icon name="ribbonmin"></cad-icon><cad-icon name="tiny"></cad-icon></button>
        </nav>
      </div>
    `;
  }
}

class CadFiles extends CadElement {
  get template() {
    return `
      <style>
        :host {
          display: flex;
          align-items: end;
          height: 27px;
          padding-left: 16px;
          border-bottom: 4px solid #3b4453;
        }
        div {
          box-sizing: border-box;
          display: flex;
          align-items: center;
          justify-content: space-between;
          width: 123px;
          height: 22px;
          padding: 0 13px 0 9px;
          border-radius: 10px 14px 0 0;
          background: #2d3542;
          color: #a9adb3;
        }
        .start { width: 130px; padding-left: 16px; }
        .on { background: #3b4453; color: #fff; }
        button { padding: 0; border: 0; background: none; display: flex; }
        .add {
          align-items: center;
          justify-content: center;
          width: 22px;
          height: 14px;
          margin: 0 0 4px 5px;
          background: #2d3542;
          border-radius: 3px 10px 3px 10px;
        }
      </style>
      <div class="start">Start</div>
      <div class="on">פרויקט*<button aria-label="Close"><cad-icon name="x10"></cad-icon></button></div>
      <div>פרויקט ערוך*<button aria-label="Close"><cad-icon name="x10"></cad-icon></button></div>
      <button class="add" aria-label="New drawing"><cad-icon name="plus"></cad-icon></button>
    `;
  }
}

// smooth path through a flat list of x, y pairs
function curve(...n) {
  const p = [];
  for (let i = 0; i < n.length; i += 2) { p.push([n[i], n[i + 1]]); }
  let d = `M${p[0]}`;
  for (let i = 0; i < p.length - 1; i++) {
    const a = p[i - 1] || p[i], b = p[i], c = p[i + 1], e = p[i + 2] || c;
    d += `C${b[0] + (c[0] - a[0]) / 6} ${b[1] + (c[1] - a[1]) / 6} ${c[0] - (e[0] - b[0]) / 6} ${c[1] - (e[1] - b[1]) / 6} ${c}`;
  }
  return d;
}

function gridLines() {
  let minor = '', major = '';
  for (let k = -5; k < 400; k++) {
    const x = Math.round(51.800 + k * 9.958) + .5;
    const y = Math.round(-4.700 + k * 9.950) + .5;
    const d = `M${x} 0V1200M0 ${y}H4000`;
    if (k % 5) { minor += d; } else { major += d; }
  }
  return `<path stroke="#1c1d22" d="${minor}"/><path stroke="#282a39" d="${major}"/>`;
}

// lower flight, three units to the pixel
function lowerFlight() {
  const y = [1117, 1069, 1024, 979, 931, 886, 838, 793, 745, 700, 655, 607, 562, 514, 469, 421];
  const left = [115, 124, 145, 172, 205, 247, 295, 349, 412, 478, 550, 628, 706, 790, 877];
  const right = [0, 565, 577, 592, 610, 634, 661, 691, 724, 763, 802, 844, 889, 934, 982];
  let pink = '', green = '';
  for (let i = 0; i < 15; i++) {
    const riser = `M${left[i]} ${y[i]}V${y[i + 1]}`;
    if (i < 11) {
      pink += `${riser}H560`;
    } else {
      green += `${riser}H${right[i + 1] || 1321}`;
    }
    if (i) { green += `M${i < 12 ? 560 : right[i]} ${y[i]}H${right[i]}V${y[i + 1]}`; }
  }
  return [pink, green];
}

function upperFlight() {
  const y = [1081, 1036, 991, 943, 898, 850, 805, 757, 712, 667, 619, 574, 526, 481, 433, 388];
  const left = [148, 196, 241, 286, 331, 370, 409, 442, 475, 502, 526, 547, 562, 574, 580];
  const right = [241, 328, 412, 496, 571, 646, 715, 778, 832, 883, 928, 964, 991, 1012, 1027];
  let d = '';
  for (let i = 0; i < 15; i++) {
    d += `M${left[i]} ${y[i]}V${y[i + 1]}H${right[i + 1] || 580}`;
    d += `M${right[i]} ${y[i]}V${y[i + 1]}`;
  }
  return d;
}

class CadView extends CadElement {
  get template() {
    const [pink, green] = lowerFlight();
    return `
      <style>
        :host { display: block; position: relative; overflow: hidden; background: #000; border-bottom: 1px solid #3b4453; }
        svg { position: absolute; inset: 0; width: 100%; height: 100%; }
        path { fill: none; vector-effect: non-scaling-stroke; }
        .g { stroke: #00ff7f; }
        .p { stroke: #ff007f; }
        .o { stroke: #994c00; }
        .h { stroke: #ff7f00; }
        .w { stroke: #fff; }
        .two { stroke-width: 2px; }
        .dots { stroke-width: 2px; stroke-dasharray: 1 1; }
        .label { position: absolute; left: 3px; top: 6px; color: #fff; display: flex; font-size: 12px; }
        .window { position: absolute; right: 12px; top: 10px; display: flex; gap: 9px; }
        button { padding: 0; border: 0; background: none; display: flex; color: inherit; font: inherit; }
        cad-nav { position: absolute; right: 4px; top: 27px; }
        cad-command { position: absolute; left: 388px; right: 389px; bottom: 0; }
      </style>
      <svg shape-rendering="crispEdges">
        ${gridLines()}
        <g transform="translate(540.200 287.200) scale(.333333)">
          <path class="o" d="M570-860V-600L568-590V1163H-1130"/>
          <path class="p" d="M560-860V1117"/>
          <path class="o" d="M-1200 1117H568M-895 1222H3035M-802-271H116M-802-226H116M-802-166H116V-271"/>
          <path class="p" d="M116-271H560M116-166H560"/>
          <path class="g" d="${green}M570 1117H607"/>
          <path class="p" d="${pink}"/>
          <path class="o" d="${curve(198, 556, 240, 510, 300, 455, 350, 415, 406, 374, 480, 322, 560, 271)}M406 374V731M604 556V916M553 745V1100"/>
          <path class="o two" d="${curve(108, 738, 117, 700, 135, 655, 160, 610, 198, 556)}M108 738V1100M198 556V916M720 376V731"/>
          <path class="o dots" d="M203 892V912M410 706V731M113 1074V1098M608 892V912M557 1074V1098"/>
          <path class="g two" d="M560 271L630 230 705 187 800 135 876 95V452M705 187V545"/>
          <path class="g" d="M979 95V452M886 187V545"/>
          <path class="g" d="${curve(607, 1117, 607, 1090, 612, 1055, 622, 1025, 640, 975, 678, 898, 724, 824, 790, 738, 862, 655, 940, 573)}L1033 481H1308"/>
          <path class="w" d="${curve(553, 745, 557, 700, 566, 650, 580, 605, 604, 556)}M800 288L979 95"/>
          <path class="w two" d="${curve(604, 556, 650, 480, 718, 376)}L800 288"/>
          <path class="w" d="M241 46L395 103 361 251M395 103C80 180-220 420-277 858"/>
        </g>
        <g transform="translate(900.200 67.200) scale(.333333)">
          <path class="g" d="M-20 1081H241${upperFlight()}"/>
          <path class="o" d="M571-220V1823M583 388H1955M583 433H1955M583 493H1955M583 1777H1955M583 1822H1955"/>
          <path class="p" d="M583-220V1822"/>
          <path class="g" d="${curve(245, 708, 340, 658, 410, 622, 480, 582, 545, 545, 583, 520, 650, 477, 715, 433, 780, 387)}M245 708V1066M577 526V880"/>
          <path class="g" d="${curve(168, 1081, 280, 965, 345, 898, 410, 830, 470, 755, 526, 667, 560, 598, 583, 550)}"/>
          <path class="g" d="${curve(245, 1066, 390, 988, 496, 930, 583, 877, 650, 835)}M227 1141L420 1040 583 943"/>
          <path class="g two" d="${curve(650, 835, 715, 790, 840, 697, 910, 628, 964, 570, 1000, 510, 1020, 460, 1030, 420)}M840 388V697M998 388V520"/>
          <path class="g dots" d="M1030 388V421M994 481V520M835 670V700"/>
          <path class="h two" d="${curve(780, 387, 840, 337, 890, 295, 960, 212, 998, 150, 1020, 105, 1033, 60)}M840 337V388M998 150V388"/>
          <path class="h" d="M1033 60V388"/>
          <path class="o dots" d="M573 852V880"/>
          <path class="p" d="${curve(583, 943, 690, 877, 800, 795, 890, 715, 960, 640, 1010, 570, 1035, 535, 1055, 495)}"/>
        </g>
        <path class="w" d="M1252 426.500h45M1304 426.500h45M1300.500 378v45M1300.500 430v45M1297.500 423.500h6v6h-6z"/>
        <path class="w" d="M20.500 767v50M21 817.500h50M16.500 812.500h9v9h-9z"/>
        <g fill="#fff" font-family="Lato" font-weight="300" font-size="18" shape-rendering="auto">
          <text x="23" y="763">Y</text>
          <text x="76" y="816">X</text>
        </g>
      </svg>
      <div class="label"><button>[−]</button><button>[Top]</button><button>[2D Wireframe]</button></div>
      <div class="window">
        <button aria-label="Minimize"><cad-icon name="vmin"></cad-icon></button>
        <button aria-label="Restore"><cad-icon name="vrest"></cad-icon></button>
        <button aria-label="Close"><cad-icon name="vclose"></cad-icon></button>
      </div>
      <cad-nav></cad-nav>
      <cad-command></cad-command>
    `;
  }
}

class CadNav extends CadElement {
  get template() {
    const tool = (name, more) => `<button aria-label="${name}"><cad-icon name="${name}"></cad-icon></button>${more ? '<cad-icon name="ndown"></cad-icon>' : ''}`;
    return `
      <style>
        :host {
          box-sizing: border-box;
          display: flex;
          flex-direction: column;
          align-items: center;
          gap: 5px;
          width: 32px;
          height: 240px;
          padding: 1px 0 2px;
          border-radius: 4px;
          background: #505050d0;
        }
        button { padding: 0; border: 0; background: none; display: flex; opacity: .8; }
        button:first-of-type { align-self: end; margin: 0 2px 5px; }
        button:last-of-type { align-self: end; margin: auto 2px 0; }
        hr { width: 26px; margin: -2px 0; border: 0; border-top: 1px solid #666; }
      </style>
      ${tool('nx')}
      ${tool('ncube')}
      ${tool('nwheel', true)}
      <hr>
      ${tool('nhand')}
      ${tool('nzoom', true)}
      ${tool('norbit', true)}
      <hr>
      ${tool('nplay')}
      ${tool('nmin')}
    `;
  }
}

class CadCommand extends CadElement {
  get template() {
    return `
      <style>
        :host { display: block; font: 12px/15px "DejaVu Sans Mono", monospace; }
        ol { margin: 0 0 0 58px; padding: 0; list-style: none; }
        li { width: max-content; margin-bottom: 1px; border-radius: 2px; background: #3c3c3c; color: #999; }
        li:nth-child(2) { background: #484848; color: #b8b8b8; }
        li:nth-child(3) { background: #585858; color: #eee; margin: 0; }
        .bar { display: flex; height: 39px; }
        .tools {
          box-sizing: border-box;
          display: flex;
          align-items: center;
          gap: 3px;
          width: 56px;
          padding: 0 6px;
          background: #1f252f;
          border-radius: 4px 0 0 4px;
        }
        .tools button:last-child { margin-left: auto; }
        .entry { flex: 1; display: flex; align-items: center; gap: 3px; padding: 0 5px; background: #b1b1b1; }
        button { padding: 0; border: 0; background: none; display: flex; }
        input { flex: 1; border: 0; padding: 0 2px; background: none; font: inherit; font-style: italic; }
        input::placeholder { color: #555; }
      </style>
      <ol>
        <li>Command: *Cancel*</li>
        <li>Command: *Cancel*</li>
        <li>Command: *Cancel*</li>
      </ol>
      <div class="bar">
        <div class="tools">
          <cad-icon name="grip"></cad-icon>
          <button aria-label="Close"><cad-icon name="x10"></cad-icon></button>
          <button aria-label="Customize"><cad-icon name="wrench"></cad-icon></button>
        </div>
        <div class="entry">
          <cad-icon name="prompt"></cad-icon>
          <button aria-label="Recent commands"><cad-icon name="dcaret"></cad-icon></button>
          <input placeholder="Type a command" aria-label="Command">
          <button aria-label="History"><cad-icon name="ucaret"></cad-icon></button>
        </div>
      </div>
    `;
  }
}

class CadStatus extends CadElement {
  get template() {
    const b = (name, on) => `<button class="${on ? 'on' : ''}" aria-label="${name}"><cad-icon name="${name}"></cad-icon></button>`;
    const more = '<button class="more" aria-label="More"><cad-icon name="caret"></cad-icon></button>';
    return `
      <style>
        :host { display: flex; height: 28px; }
        nav { display: flex; flex: 1; padding-left: 13px; gap: 2px; }
        nav a {
          height: 17px;
          padding: 0 11px;
          border-radius: 0 0 8px 8px;
          background: #2d3542;
          color: #b0b4ba;
          text-decoration: none;
          line-height: 16px;
        }
        nav a:first-child { background: #3b4453; color: #fff; font-weight: bold; }
        nav a:last-child { padding: 4px 10px 0; height: 13px; }
        .group { display: flex; height: 23px; margin: 1px 3px 0 0; background: #3b4453; }
        button {
          display: flex;
          align-items: center;
          justify-content: center;
          width: 23px;
          padding: 0;
          border: 0;
          background: none;
          color: inherit;
          font: inherit;
        }
        .wide button { width: 24px; }
        .group .more { width: 16px; }
        .group .text { width: auto; padding: 0 4px; font-size: 12px; }
        .group .num { padding: 0 1px; font-size: 11px; }
        .on { background: #5a8ac0; }
      </style>
      <nav>
        <a href="#model">Model</a><a href="#layout1">Layout1</a><a href="#layout2">Layout2</a>
        <a href="#new" aria-label="New layout"><cad-icon name="plus"></cad-icon></a>
      </nav>
      <div class="group"><button class="text">MODEL</button></div>
      <div class="group">${b('sgrid', 1)}${b('ssnap')}${more}</div>
      <div class="group wide">${b('sortho')}${b('spolar')}${more}${b('siso')}${more}</div>
      <div class="group wide">${b('sangle', 1)}${b('sosnap', 1)}${more}</div>
      <div class="group">${b('slw')}</div>
      <div class="group wide">${b('sann', 1)}${b('sauto')}${b('sscale')}<button class="text num">1:1</button>${more}</div>
      <div class="group">${b('sgear')}${more}</div>
      <div class="group">${b('splus')}</div>
      <div class="group">${b('siso2')}</div>
      <div class="group wide">${b('shw')}${b('sgraph')}</div>
      <div class="group wide">${b('sfull')}${b('smenu')}</div>
    `;
  }
}

class CadTaskbar extends CadElement {
  get template() {
    const app = name => `<button aria-label="${name}" class="${name}"><cad-icon name="${name}"></cad-icon></button>`;
    return `
      <style>
        :host {
          display: flex;
          align-items: stretch;
          height: 40px;
          background: linear-gradient(90deg, #654010 0, #653f10 27%, #4e4d0c 31%, #4a530c 40%, #434c0e 50%, #464f0e 60%, #50602b 67%, #5c5020 69%, #654010 71%);
          color: #fff;
          font-size: 12px;
          line-height: 18px;
        }
        .tray { display: flex; flex: 1; align-items: center; gap: 12px; padding-left: 20px; margin-left: 4px; border-left: 1px solid #a58a64; }
        .clock { text-align: center; padding: 0 3px; font-size: 11px; }
        .pair { display: flex; align-items: center; gap: 8px; }
        button { display: flex; align-items: center; justify-content: center; padding: 0; border: 0; background: none; color: inherit; font: inherit; }
        .apps { display: flex; }
        .apps button { width: 49px; border-bottom: 2px solid transparent; }
        .apps button:last-child { width: 51px; }
        .apps .folder { border-color: #f6f3a8; }
        .apps .acad { background: #8c8420; border-color: #f6f3a8; }
        .tile { box-sizing: border-box; width: 21px; height: 21px; border-radius: 3px; font-weight: bold; font-size: 11px; line-height: 20px; }
        .br { background: #2a2300; color: #f5b400; border: 1px solid #f5b400; border-radius: 0; line-height: 18px; }
        .ps { background: #001e36; color: #31a8ff; }
        .ai { background: #330000; color: #ff9a00; }
      </style>
      <div class="tray">
        <button aria-label="Notifications"><cad-icon name="note"></cad-icon></button>
        <div class="clock">21:57<br>07/02/2022</div>
        <button>עבר</button>
        <div class="pair">
          <button aria-label="Volume"><cad-icon name="sound"></cad-icon></button>
          <button aria-label="Hidden icons"><cad-icon name="chev"></cad-icon></button>
        </div>
      </div>
      <div class="apps">
        <button><span class="tile br">Br</span></button>
        <button><span class="tile ps">Ps</span></button>
        <button><span class="tile ai">Ai</span></button>
        ${['sketchup', 'revit', 'acad', 'find', 'snip', 'folder', 'chrome', 'globe', 'windows'].map(app).join('')}
      </div>
    `;
  }
}

class CadApp extends CadElement {
  get template() {
    return `
      <style>
        :host { display: grid; grid-template-rows: auto auto auto 1fr auto auto; height: 100vh; }
      </style>
      <cad-title></cad-title>
      <cad-ribbon></cad-ribbon>
      <cad-files></cad-files>
      <cad-view></cad-view>
      <cad-status></cad-status>
      <cad-taskbar></cad-taskbar>
    `;
  }
}

customElements.define('cad-icon', CadIcon);
customElements.define('cad-tool', CadTool);
customElements.define('cad-panel', CadPanel);
customElements.define('cad-combo', CadCombo);
customElements.define('cad-ribbon', CadRibbon);
customElements.define('cad-title', CadTitle);
customElements.define('cad-files', CadFiles);
customElements.define('cad-nav', CadNav);
customElements.define('cad-command', CadCommand);
customElements.define('cad-view', CadView);
customElements.define('cad-status', CadStatus);
customElements.define('cad-taskbar', CadTaskbar);
customElements.define('cad-app', CadApp);
</script>
</body>
</html>
